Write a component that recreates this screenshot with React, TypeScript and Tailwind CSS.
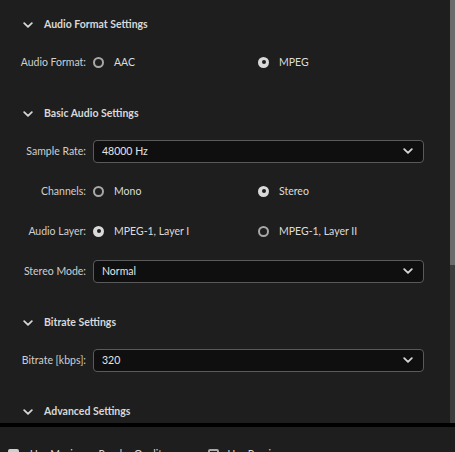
const font = { fontFamily: "Lato, 'Noto Sans', sans-serif" };

const Chevron = ({ className = "" }: { className?: string }) => (
  <svg viewBox="0 0 10 6" className={className} fill="none" stroke="currentColor" strokeWidth="1.8" strokeLinecap="round" strokeLinejoin="round">
    <path d="M1.2 1.2 5 4.8 8.8 1.2" />
  </svg>
);

const Header = ({ title }: { title: string }) => (
  <div className="flex h-[22px] items-center">
    <Chevron className="ml-[23px] mt-[2px] h-[6px] w-[10px] text-[#d6d6d6]" />
    <span className="ml-[11px] pt-[2px] text-[10.5px] font-bold text-[#d8d8d8]">{title}</span>
  </div>
);

const Label = ({ children }: { children: React.ReactNode }) => (
  <span className="w-[93px] shrink-0 pr-[7px] pt-[2px] text-right text-[10.5px] text-[#cfcfcf]">{children}</span>
);

const Radio = ({ checked, label }: { checked?: boolean; label: string }) => (
  <div className="flex w-[165px] items-center">
    {checked ? (
      <span className="flex h-[11px] w-[11px] items-center justify-center rounded-full bg-[#d9d9d9]">
        <span className="h-[4px] w-[4px] rounded-full bg-[#1e1e1e]" />
      </span>
    ) : (
      <span className="h-[11px] w-[11px] rounded-full border-2 border-[#a8a8a8]" />
    )}
    <span className="ml-[10px] pt-[2px] text-[10.5px] text-[#dcdcdc]">{label}</span>
  </div>
);

const RadioRow = ({ label, options, selected }: { label: string; options: string[]; selected: number }) => (
  <div className="flex h-10 items-center">
    <Label>{label}</Label>
    {options.map((o, i) => (
      <Radio key={o} label={o} checked={i === selected} />
    ))}
  </div>
);

const SelectRow = ({ label, value }: { label: string; value: string }) => (
  <div className="flex h-10 items-center pr-[26px]">
    <Label>{label}</Label>
    <div className="flex h-[23px] flex-1 items-center justify-between rounded-[4px] border border-[#5a5a5a] bg-[#0f0f0f] pl-[8px] pr-[10px]">
      <span className="pt-[2px] text-[10.5px] text-[#e4e4e4]">{value}</span>
      <Chevron className="h-[6px] w-[10px] text-[#d6d6d6]" />
    </div>
  </div>
);

const Section = ({ title, children }: { title: string; children?: React.ReactNode }) => (
  <div className="mb-[20px]">
    <Header title={title} />
    {children && <div className="mt-[7px]">{children}</div>}
  </div>
);

export default function App() {
  return (
    <div className="h-[452px] w-[455px] overflow-hidden bg-[#1e1e1e]" style={font}>
      <div className="flex h-[423px]">
        <div className="flex-1 overflow-hidden pt-[13px]">
          <Section title="Audio Format Settings">
            <RadioRow label="Audio Format:" options={["AAC", "MPEG"]} selected={1} />
          </Section>
          <Section title="Basic Audio Settings">
            <SelectRow label="Sample Rate:" value="48000 Hz" />
            <RadioRow label="Channels:" options={["Mono", "Stereo"]} selected={1} />
            <RadioRow label="Audio Layer:" options={["MPEG-1, Layer I", "MPEG-1, Layer II"]} selected={0} />
            <SelectRow label="Stereo Mode:" value="Normal" />
          </Section>
          <Section title="Bitrate Settings">
            <SelectRow label="Bitrate [kbps]:" value="320" />
          </Section>
          <Section title="Advanced Settings" />
        </div>
        <div className="flex w-[5px] flex-col bg-[#3c3c3c]">
          <div className="h-[265px] bg-[#6b6b6b]" />
        </div>
      </div>
      <div className="h-[4px] bg-black" />
      <div className="flex items-start pt-[22px] text-[10.5px] text-[#d8d8d8]">
        <span className="ml-[8px] h-[11px] w-[11px] rounded-[2px] bg-[#cfcfcf]" />
        <span className="ml-[11px] leading-[11px]">Use Maximum Render Quality</span>
        <span className="ml-[40px] h-[11px] w-[11px] rounded-[2px] border-2 border-[#a8a8a8]" />
        <span className="ml-[9px] leading-[11px]">Use Previews</span>
      </div>
    </div>
  );
}
